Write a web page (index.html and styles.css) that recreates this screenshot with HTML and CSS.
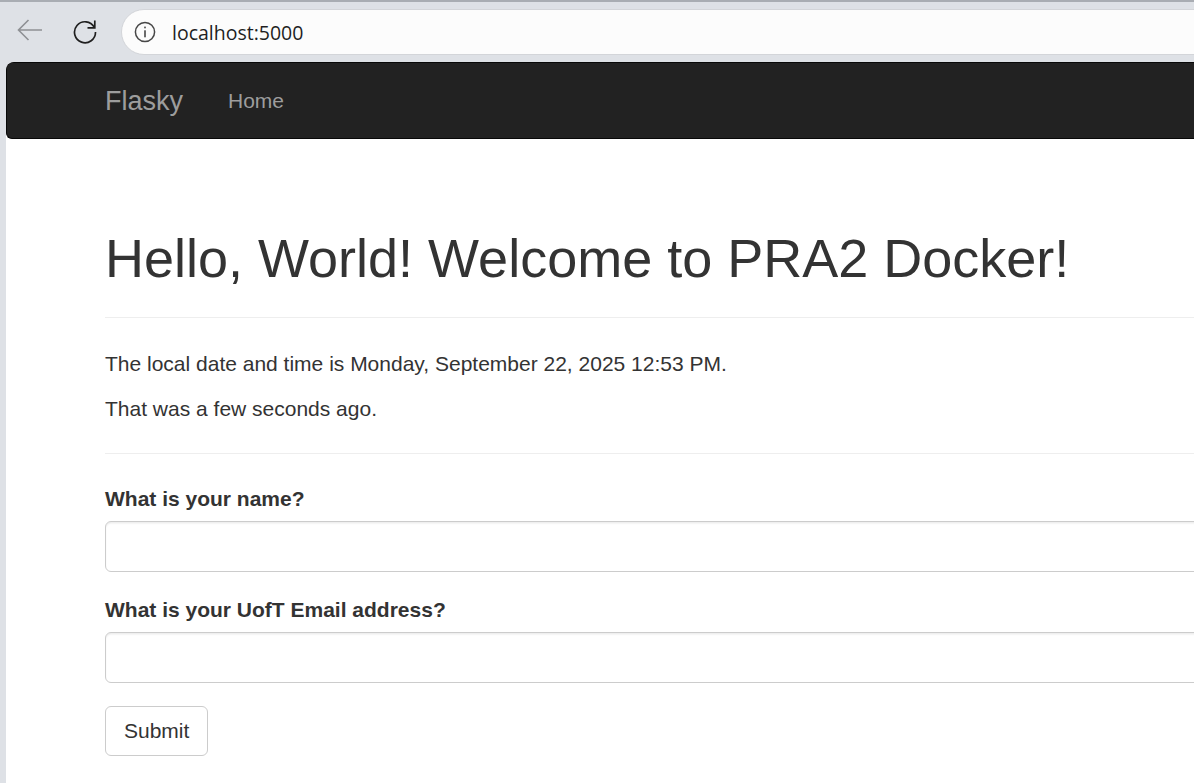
FILE: index.html
```html
<!DOCTYPE html>
<html lang="en">
<head>
<meta charset="utf-8">
<title>Flasky</title>
<link rel="stylesheet" href="styles.css">
</head>
<body>
<div class="chrome">
  <div class="chrome-tools">
    <span class="tool tool-back">
      <svg width="26" height="22" viewBox="0 0 26 22"><path d="M1.5 11H25M11.5 1L1.5 11L11.5 21" fill="none" stroke="#8e9094" stroke-width="1.6"/></svg>
    </span>
    <span class="tool tool-reload">
      <svg width="26" height="26" viewBox="0 0 26 26"><path d="M22.2 9.2A10.5 10.5 0 1 0 23.5 14" fill="none" stroke="#1f1f1f" stroke-width="1.7"/><path d="M22.8 2.5V9.8H15.5" fill="none" stroke="#1f1f1f" stroke-width="1.7"/></svg>
    </span>
  </div>
  <div class="omnibox">
    <svg class="info" width="22" height="22" viewBox="0 0 22 22"><circle cx="11" cy="11" r="9.6" fill="none" stroke="#474747" stroke-width="1.5"/><rect x="10.2" y="9.3" width="1.6" height="7" fill="#474747"/><rect x="10.2" y="5.6" width="1.6" height="1.7" fill="#474747"/></svg>
    <span class="url">localhost:5000</span>
  </div>
</div>
<div class="frame">
  <div class="frame-side"></div>
  <div class="viewport">
    <nav class="navbar">
      <a class="brand" href="#">Flasky</a>
      <a class="nav-link" href="#">Home</a>
    </nav>
    <main class="container">
      <div class="page-header">
        <h1>Hello, World! Welcome to PRA2 Docker!</h1>
      </div>
      <p>The local date and time is Monday, September 22, 2025 12:53 PM.</p>
      <p>That was a few seconds ago.</p>
      <hr class="rule">
      <form class="form">
        <div class="form-group">
          <label class="label" for="name">What is your name?</label>
          <input class="input" id="name" type="text">
        </div>
        <div class="form-group">
          <label class="label" for="email">What is your UofT Email address?</label>
          <input class="input" id="email" type="text">
        </div>
        <button class="btn" type="button">Submit</button>
      </form>
    </main>
  </div>
</div>
</body>
</html>
```

FILE: styles.css
```css
html, body {
  margin: 0;
  padding: 0;
  width: 1194px;
  height: 783px;
  overflow: hidden;
  background: #dee1e6;
}
body {
  font-family: "Liberation Sans", Arial, Helvetica, sans-serif;
  color: #333;
}
.chrome {
  height: 60px;
  border-top: 2px solid #a9adb3;
  background: #dee1e6;
  display: flex;
  align-items: flex-start;
}
.chrome-tools {
  display: flex;
  align-items: center;
  height: 62px;
  margin-top: -2px;
  width: 121px;
  flex: none;
}
.tool {
  display: flex;
  align-items: center;
  justify-content: center;
}
.tool-back {
  margin-left: 17px;
  margin-top: -2px;
}
.tool-reload {
  margin-left: 29px;
  margin-top: -1px;
}
.omnibox {
  flex: none;
  width: 1120px;
  height: 44px;
  margin-top: 7px;
  background: #fcfcfc;
  border: 1px solid #d3d5d9;
  border-radius: 23px;
  display: flex;
  align-items: center;
  box-sizing: content-box;
}
.info {
  margin-left: 12px;
}
.url {
  margin-left: 16px;
  font-family: "Open Sans", "Noto Sans", sans-serif;
  font-size: 19.5px;
  color: #1f1f1f;
}
.frame {
  display: flex;
  height: 721px;
}
.frame-side {
  width: 6px;
  flex: none;
  background: #dee1e6;
}
.viewport {
  flex: 1;
  background: #fff;
  border-top-left-radius: 8px;
  overflow: hidden;
}
.navbar {
  height: 75px;
  background: #222;
  border: 1px solid #080808;
  border-right: none;
  border-radius: 6px 0 0 6px;
  display: flex;
  align-items: flex-start;
  padding-left: 75.5px;
  margin-bottom: 30px;
}
.brand {
  padding: 22.5px;
  font-size: 27px;
  line-height: 30px;
  color: #9d9d9d;
  text-decoration: none;
}
.nav-link {
  padding: 22.5px;
  font-size: 21px;
  line-height: 30px;
  color: #9d9d9d;
  text-decoration: none;
}
.container {
  padding-left: 99px;
  width: 1300px;
  font-size: 21px;
  line-height: 30px;
  display: flow-root;
}
.page-header {
  margin: 60px 0 31px;
  padding-bottom: 13.5px;
  border-bottom: 1.5px solid #eee;
}
h1 {
  margin: 0 0 15px;
  font-size: 54px;
  font-weight: 500;
  line-height: 1.1;
  color: #333;
}
p {
  margin: 0 0 15px;
}
.rule {
  margin: 29px 0 30px;
  border: 0;
  border-top: 1.5px solid #eee;
  height: 0;
}
.form {
  margin: 0;
}
.form-group {
  margin-bottom: 22.5px;
}
.label {
  display: inline-block;
  font-weight: bold;
  margin-bottom: 7.5px;
}
.input {
  display: block;
  box-sizing: border-box;
  width: 100%;
  height: 51px;
  padding: 9px 18px;
  font-family: inherit;
  font-size: 21px;
  border: 1.5px solid #ccc;
  border-radius: 6px;
  box-shadow: inset 0 1.5px 1.5px rgba(0, 0, 0, .075);
  background: #fff;
  color: #555;
}
.btn {
  display: inline-block;
  box-sizing: border-box;
  height: 50px;
  padding: 9px 18px;
  font-family: inherit;
  font-size: 21px;
  line-height: 30px;
  color: #333;
  background: #fff;
  border: 1.5px solid #ccc;
  border-radius: 6px;
}
```
